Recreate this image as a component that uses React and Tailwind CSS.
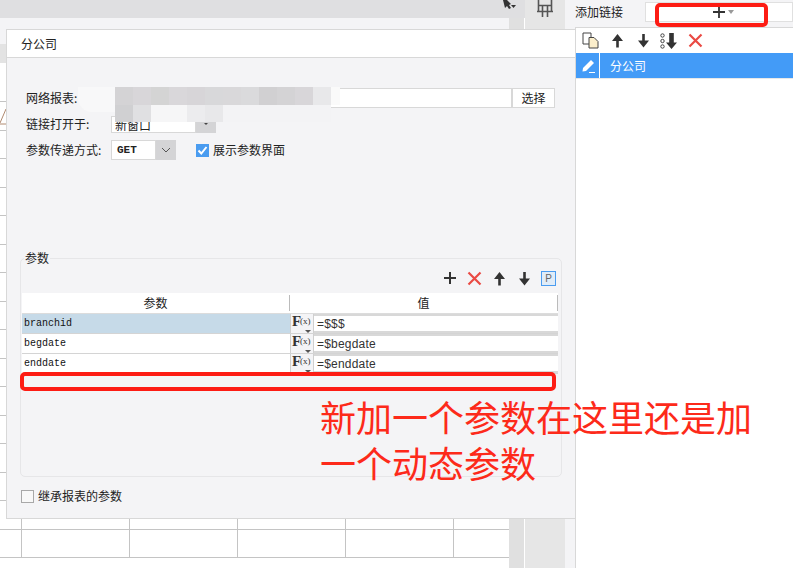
const cjk = { fontFamily: '"Noto Sans CJK SC", sans-serif' };
const colsW = [22, 108, 108, 108, 108, 55];

function Sheet() {
  const rows = [39, ...Array(16).fill(28.5)];
  return (
    <div className="flex-1 flex flex-col min-w-0 bg-[#f4f4f6]">
      <div className="flex h-[18px] shrink-0">
        <div className="flex-1 bg-[#dfdfe1]" />
        <div className="w-[25px] bg-[#dfdfe1] flex justify-center items-start -ml-[25px]">
          <svg width="14" height="12" viewBox="0 0 14 12" className="-ml-2">
            <path d="M1 0h4l4 4-2 1 2 3-2 1-2-3-2 2z" fill="#333" />
            <path d="M9 5h5l-2.500 3z" fill="#333" />
          </svg>
        </div>
        <div className="w-[40px] bg-[#e6e6e6] relative">
          <svg width="16" height="17" viewBox="0 0 16 17" className="absolute left-[12px] top-0">
            <path d="M1.500 0v11.500h13V0M1.500 5.500h13M5.500 5.500V17M10.500 5.500V17M0 11.500h16" stroke="#555" strokeWidth="1.600" fill="none" />
          </svg>
        </div>
        <div className="w-[10px]" />
      </div>
      <div className="flex flex-1 min-h-0">
        <div className="w-[509px] flex flex-col">
          <div className="h-[26px]" />
          <div className="h-[19px] bg-[#e3e3e3]" />
          <div className="flex-1 bg-white overflow-hidden relative">
            {rows.map((h, i) => (
              <div key={i} className="flex border-b border-[#c4c4c4] box-border" style={{ height: h }}>
                {colsW.map((w, j) => (
                  <div key={j} className={j < 5 ? 'border-r border-[#c4c4c4]' : ''} style={{ width: w }} />
                ))}
              </div>
            ))}
            <svg width="8" height="20" viewBox="0 0 8 20" className="absolute left-0 top-[44px]">
              <path d="M0 16 6 2M0 17h6" stroke="#b08a70" strokeWidth="1" fill="none" />
            </svg>
          </div>
        </div>
        <div className="w-[15px] bg-[#e0e0e0] border-r border-white box-content" />
        <div className="w-[40px] bg-[#e6e6e6] -mt-[10px]" />
        <div className="w-[10px]" />
      </div>
    </div>
  );
}

function Row({ name, value, selected }) {
  return (
    <div className="flex h-5 border-b border-[#d4d4d4] box-border">
      <div className={`w-[268px] pl-[2px] text-[10px] leading-[19px] text-[#111] ${selected ? 'bg-[#c6dae8]' : 'bg-white'}`} style={{ fontFamily: '"Liberation Mono", monospace' }}>{name}</div>
      <div className="w-[24px] border-x border-[#cfcfcf] bg-[#f4f4f6] relative overflow-hidden">
        <span className="absolute left-[1px] -top-[1px] text-[15px] leading-[16px] font-semibold text-[#333]" style={{ fontFamily: '"Liberation Serif", serif' }}>F</span>
        <span className="absolute left-[9px] top-[1px] text-[9px] leading-[12px] text-[#333]" style={{ fontFamily: '"Liberation Serif", serif' }}>(x)</span>
        <span className="absolute left-[14px] bottom-0 w-0 h-0 border-x-[3px] border-x-transparent border-t-[3px] border-t-[#555]" />
      </div>
      <div className="flex-1 bg-white border-y-2 border-[#d8d8d8] pl-[3px] text-[12px] leading-[16px] tracking-[0.2px] text-[#333]" style={{ fontFamily: '"Liberation Sans", sans-serif' }}>{value}</div>
    </div>
  );
}

const Up = () => (
  <svg width="13" height="15" viewBox="0 0 13 15"><path d="M6.500 1 12 8H7.800v6.500H5.200V8H1z" fill="#333" /></svg>
);
const Down = () => (
  <svg width="13" height="15" viewBox="0 0 13 15"><path d="M6.500 14.500 12 7.500H7.800V1H5.200v6.500H1z" fill="#333" /></svg>
);
const Cross = () => (
  <svg width="15" height="15" viewBox="0 0 15 15"><path d="M1.500 1.500 13.500 13.500M13.500 1.500 1.500 13.500" stroke="#ea4a44" strokeWidth="2.200" /></svg>
);

function Dialog() {
  return (
    <div className="absolute left-[6px] top-[29px] w-[570px] h-[490px] bg-[#f4f4f6] border border-[#d8d8d8] flex flex-col text-[12px] text-[#222]" style={cjk}>
      <div className="h-[28px] bg-white border-b border-[#d8d8d8] pl-[14px] leading-[27px] shrink-0">分公司</div>

      <div className="flex items-center mt-[30px] h-[20px] pl-[19px]">
        <span className="w-[88px]">网络报表:</span>
        <div className="w-[398px] h-[20px] bg-white border border-[#d8d8d8]" />
        <div className="w-[43px] h-[20px] bg-white border border-[#d8d8d8] text-center leading-[18px]">选择</div>
      </div>
      <div className="flex items-center mt-[6px] h-[20px] pl-[19px]">
        <span className="w-[85px]">链接打开于:</span>
        <div className="w-[85px] h-[17px] bg-white border border-[#d8d8d8] pl-[3px] leading-[16px] overflow-hidden">新窗口</div>
        <div className="w-[20px] h-[17px] bg-[#d4d4d6] flex justify-center items-center">
          <span className="w-0 h-0 border-x-[2px] border-x-transparent border-t-[2px] border-t-[#444]" />
        </div>
      </div>
      <div className="flex items-center mt-[6px] h-[20px] pl-[19px]">
        <span className="w-[85px]">参数传递方式:</span>
        <div className="w-[45px] h-[20px] bg-white border border-[#d8d8d8] pl-[5px] leading-[18px] text-[11px] font-bold" style={{ fontFamily: '"Liberation Mono", monospace' }}>GET</div>
        <div className="w-[20px] h-[20px] bg-[#d4d4d6] flex justify-center items-center">
          <svg width="10" height="6" viewBox="0 0 10 6"><path d="M1 1l4 4 4-4" stroke="#555" strokeWidth="1" fill="none" /></svg>
        </div>
        <div className="ml-[20px] w-[13px] h-[13px] bg-[#4a9cf0] flex items-center justify-center">
          <svg width="11" height="11" viewBox="0 0 11 11"><path d="M1.500 5.500 4.300 8.500 9.500 2" stroke="#fff" strokeWidth="2" fill="none" /></svg>
        </div>
        <span className="ml-[4px]">展示参数界面</span>
      </div>

      <div className="mt-[98px] ml-[13px] w-[542px] h-[219px] border border-[#e6e6e8] rounded-[5px] relative">
        <span className="absolute left-[3px] -top-[9px] px-[1px] bg-[#f4f4f6] leading-[16px]">参数</span>
        <div className="flex items-center justify-end h-[34px] pt-[4px]">
          <div className="w-[25px] flex justify-center">
            <svg width="14" height="14" viewBox="0 0 14 14"><path d="M7 1v12M1 7h12" stroke="#333" strokeWidth="2" /></svg>
          </div>
          <div className="w-[25px] flex justify-center"><Cross /></div>
          <div className="w-[25px] flex justify-center"><Up /></div>
          <div className="w-[24px] flex justify-center"><Down /></div>
          <div className="w-[25px] flex justify-center">
            <div className="w-[15px] h-[15px] border border-[#4a9cf0] bg-[#e0ecf8] text-[10px] leading-[13px] text-center text-[#666]" style={{ fontFamily: '"Liberation Sans", sans-serif' }}>P</div>
          </div>
        </div>
        <div className="ml-[1px] w-[536px]">
          <div className="flex h-[20px] bg-white border-b-2 border-[#dcdcdc] box-content -mb-[1px] text-center leading-[19px]">
            <div className="w-[268px] border-r border-[#bbb] my-[2px] leading-[15px]">参数</div>
            <div className="flex-1 border-r border-[#bbb] my-[2px] leading-[15px]">值</div>
          </div>
          <Row name="branchid" value="=$$$" selected />
          <Row name="begdate" value="=$begdate" />
          <Row name="enddate" value="=$enddate" />
        </div>
      </div>

      <div className="flex items-center mt-[12px] pl-[14px] h-[14px]">
        <div className="w-[13px] h-[13px] border border-[#a8a8a8] bg-[#f8f8f8]" />
        <span className="ml-[4px]">继承报表的参数</span>
      </div>
    </div>
  );
}

function Side() {
  return (
    <div className="w-[218px] flex flex-col bg-white text-[12px] text-[#222]" style={cjk}>
      <div className="h-[28px] bg-[#f4f4f6] border-b border-[#d8d8d8] flex items-start shrink-0">
        <span className="w-[70px] pt-[3px] leading-[18px]">添加链接</span>
        <div className="flex-1 h-[20px] mt-[2px] bg-white border border-[#e0e0e0] flex pl-[66px] pt-[2px]">
          <svg width="14" height="14" viewBox="0 0 14 14"><path d="M7 1v12M1 7h12" stroke="#333" strokeWidth="1.800" /></svg>
          <span className="ml-[2px] mt-[5px] w-0 h-0 border-x-[3px] border-x-transparent border-t-[4px] border-t-[#999]" />
        </div>
      </div>
      <div className="flex-1 border-l border-[#d8d8d8] flex flex-col">
        <div className="h-[25px] flex items-center pl-[2px] shrink-0">
          <div className="w-[26px] flex justify-center">
            <svg width="18" height="17" viewBox="0 0 18 17">
              <path d="M1 1h8v11H1z" fill="#fff" stroke="#444" />
              <path d="M7 5.500h5l4 4V16H7z" fill="#fbeecb" stroke="#444" />
            </svg>
          </div>
          <div className="w-[26px] flex justify-center"><Up /></div>
          <div className="w-[26px] flex justify-center"><Down /></div>
          <div className="w-[26px] flex justify-center">
            <svg width="18" height="16" viewBox="0 0 18 16">
              <circle cx="2.500" cy="2.500" r="1.700" fill="none" stroke="#444" />
              <circle cx="2.500" cy="8" r="1.700" fill="none" stroke="#444" />
              <circle cx="2.500" cy="13.500" r="1.700" fill="none" stroke="#444" />
              <path d="M11.500 16 17 9.500H13.800V0H9.200V9.500H6z" fill="#333" />
            </svg>
          </div>
          <div className="w-[26px] flex justify-center"><Cross /></div>
        </div>
        <div className="h-[25px] bg-[#439bf7] border-b border-[#e8e8e8] flex text-white shrink-0 box-content">
          <div className="w-[24px] border-r border-white flex items-center justify-center">
            <svg width="16" height="16" viewBox="0 0 16 16">
              <path d="M3 10 11 2 14 5 6 13 2.500 13.500z" fill="#fff" />
              <path d="M9 14.500h6" stroke="#fff" />
            </svg>
          </div>
          <span className="pl-[10px] leading-[26px]">分公司</span>
        </div>
      </div>
    </div>
  );
}

export default function App() {
  return (
    <div className="relative w-[793px] h-[568px] flex overflow-hidden bg-white">
      <Sheet />
      <Side />
      <Dialog />

      {/* mosaic that hides the report path */}
      <div className="absolute left-[78px] top-[87px] w-[37px] h-[25px] bg-[#f8f8f9] rounded-bl-[14px]" />
      <div className="absolute left-[115px] top-[87px] flex h-[18px]">
        {['#d4d3d5', '#d8d6d9', '#d4d4d4', '#d9d7da', '#d7d5d8', '#d8d8da', '#d9d8da', '#dadadc', '#d1d0d2', '#d4d3d5', '#d8d6d9', '#e8e8ea', '#fafafa'].map((c, i) => (
          <div key={i} className={i === 12 ? 'w-[9px]' : 'w-[18px]'} style={{ background: c }} />
        ))}
      </div>
      <div className="absolute left-[115px] top-[105px] flex h-[17px]">
        {['#d0d0d2', '#e0e0e2', '#f6f6f7', '#f6f6f7', '#ececee', '#e8e8ea', '#f3f3f5', '#f3f3f5', '#f3f3f5', '#f3f3f5', '#f3f3f5', '#f3f3f5'].map((c, i) => (
          <div key={i} className="w-[18px]" style={{ background: c }} />
        ))}
      </div>

      {/* red annotations */}
      <div className="absolute left-[655px] top-[3px] w-[113px] h-[24px] border-[4px] border-[#fd1c14] rounded-[5px]" />
      <div className="absolute left-[20px] top-[372px] w-[536px] h-[19px] border-[4px] border-[#fd1c14] rounded-[5px]" />
      <div className="absolute left-[320px] top-[397px] w-[440px] text-[36px] leading-[46px] text-[#fd2a1a]" style={{ fontFamily: '"Liberation Sans", "Noto Sans CJK SC", sans-serif' }}>
        新加一个参数在这里还是加<br />一个动态参数
      </div>
    </div>
  );
}
